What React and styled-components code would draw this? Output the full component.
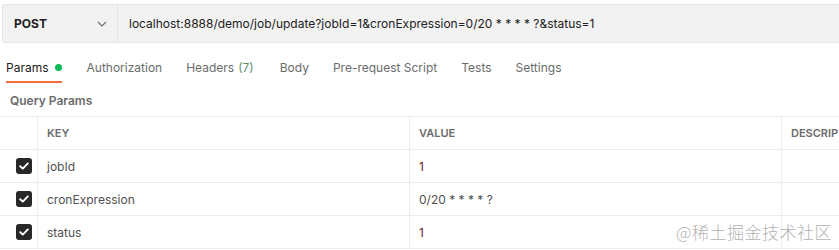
import React from 'react';
import styled, { createGlobalStyle } from 'styled-components';

const GlobalStyle = createGlobalStyle`
  html, body {
    margin: 0;
    padding: 0;
    background: #ffffff;
    font-family: Inter, "Noto Sans", sans-serif;
    -webkit-font-smoothing: antialiased;
  }
`;

const Page = styled.div`
  position: relative;
  width: 839px;
  height: 250px;
  overflow: hidden;
  background: #ffffff;
`;

const RequestBar = styled.div`
  display: flex;
  align-items: center;
  box-sizing: border-box;
  height: 39px;
  margin: 4px 0 0 2px;
  background: #f2f2f2;
  border: 1px solid #e6e6e6;
  border-right: none;
  border-radius: 3px 0 0 3px;
`;

const MethodSelect = styled.div`
  display: flex;
  align-items: center;
  justify-content: space-between;
  width: 115px;
  height: 100%;
  box-sizing: border-box;
  padding: 0 10px 0 11px;
  border-right: 1px solid #e3e3e3;
  font-size: 12px;
  font-weight: 700;
  color: #212121;
`;

const UrlText = styled.div`
  padding-left: 11px;
  font-size: 12px;
  color: #212121;
  white-space: nowrap;
`;

const Tabs = styled.div`
  display: flex;
  margin-top: 10px;
  padding-left: 6px;
`;

const Tab = styled.div`
  display: flex;
  align-items: center;
  box-sizing: border-box;
  height: 30px;
  margin-right: ${(p) => p.$gap}px;
  font-size: 12px;
  color: ${(p) => (p.$active ? '#212121' : '#6b6b6b')};
  border-bottom: 2px solid ${(p) => (p.$active ? '#f26b3a' : 'transparent')};
`;

const Count = styled.span`
  margin-left: 4px;
  color: #5f8f6c;
`;

const Dot = styled.span`
  width: 7px;
  height: 7px;
  margin-left: 6px;
  border-radius: 50%;
  background: #0cbb52;
`;

const SectionTitle = styled.div`
  box-sizing: border-box;
  height: 33px;
  padding: 10px 0 0 10px;
  font-size: 12px;
  font-weight: 600;
  line-height: 16px;
  color: #6b6b6b;
`;

const Table = styled.div`
  display: grid;
  grid-template-columns: 38px 372px 372px 100px;
  border-top: 1px solid #ededed;
`;

const Cell = styled.div`
  display: flex;
  align-items: center;
  justify-content: ${(p) => (p.$center ? 'flex-end' : 'flex-start')};
  box-sizing: border-box;
  height: 33px;
  padding: ${(p) => (p.$center ? '0 5px 0 0' : '0 0 0 9px')};
  border-bottom: 1px solid #ededed;
  border-right: ${(p) => (p.$last ? 'none' : '1px solid #ededed')};
  font-size: ${(p) => (p.$head ? '11px' : '12px')};
  font-weight: ${(p) => (p.$head ? 600 : 400)};
  color: ${(p) => (p.$head ? '#6b6b6b' : p.$tone || '#505050')};
  white-space: nowrap;
  overflow: hidden;
`;

const Check = styled.span`
  display: flex;
  align-items: center;
  justify-content: center;
  width: 16px;
  height: 16px;
  border-radius: 3px;
  background: #282828;
`;

const Watermark = styled.div`
  position: absolute;
  right: 7px;
  bottom: 6px;
  font-family: "Noto Sans CJK SC", sans-serif;
  font-size: 17px;
  font-weight: 300;
  color: rgba(150, 150, 150, 0.75);
  letter-spacing: 0.5px;
`;

function CheckBox() {
  return (
    <Check>
      <svg width="10" height="8" viewBox="0 0 10 8">
        <path d="M1.2 4.2 L3.8 6.6 L8.8 1.4" stroke="#fff" strokeWidth="1.9" fill="none" strokeLinecap="round" strokeLinejoin="round" />
      </svg>
    </Check>
  );
}

function Chevron() {
  return (
    <svg width="10" height="6" viewBox="0 0 10 6">
      <path d="M1 1 L5 5 L9 1" stroke="#6b6b6b" strokeWidth="1.1" fill="none" />
    </svg>
  );
}

const tabs = [
  { name: 'Params', gap: 25, active: true, dot: true },
  { name: 'Authorization', gap: 24 },
  { name: 'Headers', gap: 26, count: '(7)' },
  { name: 'Body', gap: 24 },
  { name: 'Pre-request Script', gap: 24 },
  { name: 'Tests', gap: 24 },
  { name: 'Settings', gap: 0 },
];

const params = [
  { key: 'jobId', value: '1', tone: '#6b1d2a' },
  { key: 'cronExpression', value: '0/20 * * * * ?' },
  { key: 'status', value: '1', tone: '#6b1d2a' },
];

function App() {
  return (
    <Page>
      <GlobalStyle />
      <RequestBar>
        <MethodSelect>
          POST
          <Chevron />
        </MethodSelect>
        <UrlText>localhost:8888/demo/job/update?jobId=1&amp;cronExpression=0/20 * * * * ?&amp;status=1</UrlText>
      </RequestBar>
      <Tabs>
        {tabs.map((t) => (
          <Tab key={t.name} $gap={t.gap} $active={t.active}>
            {t.name}
            {t.count && <Count>{t.count}</Count>}
            {t.dot && <Dot />}
          </Tab>
        ))}
      </Tabs>
      <SectionTitle>Query Params</SectionTitle>
      <Table>
        <Cell $head />
        <Cell $head>KEY</Cell>
        <Cell $head>VALUE</Cell>
        <Cell $head $last>DESCRIPTION</Cell>
        {params.map((p) => (
          <React.Fragment key={p.key}>
            <Cell $center>
              <CheckBox />
            </Cell>
            <Cell>{p.key}</Cell>
            <Cell $tone={p.tone}>{p.value}</Cell>
            <Cell $last />
          </React.Fragment>
        ))}
      </Table>
      <Watermark>@稀土掘金技术社区</Watermark>
    </Page>
  );
}

export default App;
